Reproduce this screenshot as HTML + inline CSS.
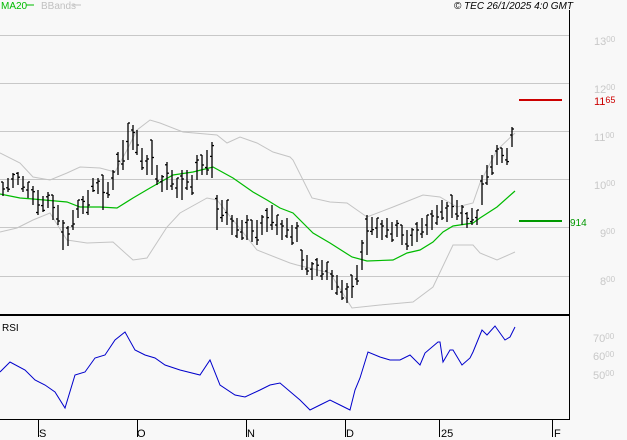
<!DOCTYPE html>
<html><head><meta charset="utf-8"><style>
body{margin:0;background:#f8f8f8;width:627px;height:440px;overflow:hidden;font-family:"Liberation Sans",sans-serif}
svg{display:block}
</style></head><body>
<svg width="627" height="440" xmlns="http://www.w3.org/2000/svg" font-family="Liberation Sans, sans-serif">
<rect width="627" height="440" fill="#f8f8f8"/>
<g stroke="#c8c8c8" stroke-width="1">
<line x1="0" y1="35.5" x2="569" y2="35.5"/><line x1="0" y1="83.5" x2="569" y2="83.5"/>
<line x1="0" y1="131.5" x2="569" y2="131.5"/><line x1="0" y1="179.5" x2="569" y2="179.5"/>
<line x1="0" y1="227.5" x2="569" y2="227.5"/><line x1="0" y1="276.5" x2="569" y2="276.5"/>
</g>
<g fill="none" stroke="#c4c4c4" stroke-width="1">
<polyline points="0,153 20,163 33,177 50,180 67,173 80,167 100,168 115,172 127,150 137,130 150,120 160,123 183,132 217,135 227,143 240,137 257,143 273,152 290,157 293,160 312,198 330,202 347,203 367,217 393,207 423,195 440,197 457,207 473,203 480,183 497,150 515,133"/>
<polyline points="0,232 17,228 33,220 50,213 67,240 87,243 113,242 133,260 147,258 167,227 180,213 207,198 217,200 233,220 257,250 290,263 297,265 330,273 352,308 380,305 413,302 433,287 453,245 473,245 480,253 497,260 515,252"/>
</g>
<polyline fill="none" stroke="#00bb00" stroke-width="1.2" points="0,194 20,198 33,199 67,202 80,207 100,207 117,208 133,198 150,188 173,175 193,172 213,167 233,178 253,192 267,200 280,208 293,213 313,233 330,243 352,257 367,261 393,260 407,253 420,250 433,242 443,232 453,226 473,223 480,218 497,207 515,191"/>
<g id="bars" stroke="#000" stroke-width="1.3"></g>
<line x1="519" y1="100" x2="562" y2="100" stroke="#cc0000" stroke-width="2"/>
<line x1="519" y1="221" x2="562" y2="221" stroke="#009900" stroke-width="2"/>
<line x1="569.5" y1="10" x2="569.5" y2="420" stroke="#000" stroke-width="1"/>
<line x1="0" y1="315" x2="570" y2="315" stroke="#000" stroke-width="2"/>
<line x1="0" y1="419.5" x2="570" y2="419.5" stroke="#000" stroke-width="1"/>
<g stroke="#000"><line x1="38.5" y1="419" x2="38.5" y2="437"/><line x1="137.5" y1="419" x2="137.5" y2="437"/><line x1="246.5" y1="419" x2="246.5" y2="437"/><line x1="345.5" y1="419" x2="345.5" y2="437"/><line x1="439.5" y1="419" x2="439.5" y2="437"/><line x1="552.5" y1="419" x2="552.5" y2="437"/></g>
<g font-size="11" fill="#000"><text x="39" y="437">S</text><text x="137" y="437">O</text><text x="247" y="437">N</text><text x="346" y="437">D</text><text x="441" y="437">25</text><text x="554" y="437">F</text></g>
<polyline fill="none" stroke="#0000cc" stroke-width="1" points="0,372 10,362 25,370 35,380 45,385 55,392 65,408 75,375 85,372 95,358 105,355 115,340 125,332 135,350 145,355 155,358 165,365 180,370 200,375 210,360 220,385 235,395 245,397 260,390 270,385 280,383 300,400 310,410 320,405 330,400 340,405 350,410 355,390 360,378 368,352 380,357 390,360 400,360 410,355 420,365 425,353 438,342 440,342 443,362 450,350 453,350 462,365 470,358 473,352 482,330 487,335 495,326 505,340 510,337 515,327"/>
<text x="2" y="331" font-size="10" fill="#000">RSI</text>
<text x="1" y="9" font-size="10" fill="#00bb00">MA20</text><line x1="26" y1="5" x2="34" y2="5" stroke="#00bb00"/>
<text x="41" y="9" font-size="10" fill="#c0c0c0">BBands</text><line x1="73" y1="5" x2="81" y2="5" stroke="#c0c0c0"/>
<text x="573" y="9" font-size="10" font-style="italic" fill="#000" text-anchor="end">© TEC 26/1/2025 4:0 GMT</text>
<g fill="#c8c8c8" font-size="11">
<text x="594" y="45">13<tspan font-size="8" dy="-3">00</tspan></text>
<text x="594" y="93">12<tspan font-size="8" dy="-3">00</tspan></text>
<text x="594" y="141">11<tspan font-size="8" dy="-3">00</tspan></text>
<text x="594" y="189">10<tspan font-size="8" dy="-3">00</tspan></text>
<text x="600" y="237">9<tspan font-size="8" dy="-3">00</tspan></text>
<text x="600" y="285">8<tspan font-size="8" dy="-3">00</tspan></text>
<text x="593" y="342">70<tspan font-size="8" dy="-3">00</tspan></text>
<text x="593" y="360">60<tspan font-size="8" dy="-3">00</tspan></text>
<text x="593" y="379">50<tspan font-size="8" dy="-3">00</tspan></text>
</g>
<text x="594" y="105" font-size="11" fill="#cc0000">11<tspan font-size="9" dy="-2">65</tspan></text>
<text x="570" y="226" font-size="10" fill="#009900">914</text>
</svg>
<script>
var d=[[3,182,196],[8,178,192],[13,173,188],[18,172,185],[23,176,192],[28,182,198],[33,186,205],[38,190,215],[43,196,212],[48,192,208],[53,195,220],[58,205,225],[63,220,250],[68,226,246],[73,210,230],[78,200,218],[83,196,214],[88,190,215],[93,178,192],[98,178,194],[103,175,210],[108,182,198],[113,170,190],[118,152,175],[123,140,170],[128,123,160],[133,125,150],[137,130,155],[142,148,170],[147,155,175],[152,140,175],[157,165,185],[162,175,192],[167,162,190],[172,170,190],[177,178,198],[182,170,200],[187,170,190],[192,175,195],[197,155,180],[202,155,175],[207,150,175],[212,142,178],[217,195,230],[222,200,222],[227,200,225],[232,215,235],[237,218,238],[242,220,240],[247,215,240],[252,220,242],[257,220,245],[262,215,235],[267,208,232],[272,205,230],[277,215,235],[282,220,240],[287,218,238],[292,225,245],[297,222,242],[302,250,270],[307,255,275],[312,262,280],[317,258,276],[322,260,280],[327,262,280],[332,270,290],[337,275,295],[342,280,300],[347,283,303],[352,275,298],[357,265,285],[362,240,270],[367,215,255],[372,217,235],[377,218,238],[382,220,240],[387,218,238],[392,222,242],[397,220,237],[402,225,245],[407,230,250],[412,228,246],[417,222,242],[422,218,238],[427,215,235],[432,210,230],[437,205,225],[442,200,220],[447,202,222],[452,195,218],[457,200,220],[462,205,225],[467,212,228],[472,208,225],[477,210,225],[482,175,205],[487,165,185],[492,155,175],[497,145,165],[502,148,163],[507,148,165],[512,127,147]];
var g=document.getElementById('bars'),s='';
d.forEach(function(b,i){var o=b[1]+(b[2]-b[1])*((i*7%10)/10),c=b[1]+(b[2]-b[1])*(((i*3+5)%10)/10);
s+='<line x1="'+b[0]+'" y1="'+b[1]+'" x2="'+b[0]+'" y2="'+b[2]+'"/><line x1="'+(b[0]-2)+'" y1="'+o+'" x2="'+b[0]+'" y2="'+o+'"/><line x1="'+b[0]+'" y1="'+c+'" x2="'+(b[0]+2)+'" y2="'+c+'"/>';});
g.innerHTML=s;
</script>
</body></html>
